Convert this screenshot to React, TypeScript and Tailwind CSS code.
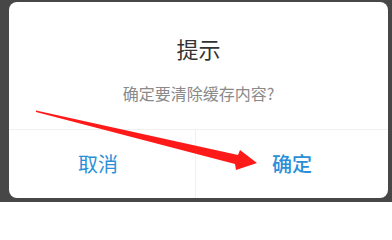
const font = { fontFamily: '"Noto Sans CJK SC", "Noto Sans", sans-serif' };

const App = () => {
  return (
    <div
      className="relative w-[392px] h-[202px] overflow-hidden bg-[#474747] pl-[9px] pr-[4px] pt-[2px] pb-[4px]"
      style={font}
    >
      {/* Dialog */}
      <div className="flex flex-col w-full h-full bg-white rounded-[8px] overflow-hidden">
        <div className="flex flex-col items-center h-[128px] border-b border-[#f0f0f0]">
          <h1 className="mt-[31px] text-[22px] leading-[30px] text-[#333333]">提示</h1>
          <p className="mt-[19px] text-[16px] leading-[22px] text-[#8a8a8a]">确定要清除缓存内容?</p>
        </div>
        <div className="flex flex-1 flex-row">
          <button className="w-[187px] flex items-center justify-center pr-[8px] border-r border-[#f0f0f0] text-[20px] text-[#2a8fd8]">
            取消
          </button>
          <button className="flex-1 flex items-center justify-center text-[20px] text-[#2a8fd8] font-medium">
            确定
          </button>
        </div>
      </div>

      {/* Red annotation arrow */}
      <svg
        className="absolute left-0 top-0 pointer-events-none"
        width="392"
        height="202"
        viewBox="0 0 392 202"
      >
        <polygon
          points="36,110.5 238,155 240,150 257,163 236,170 235,164 36,112"
          fill="#ff1a1a"
        />
      </svg>
    </div>
  );
};

export default App;
